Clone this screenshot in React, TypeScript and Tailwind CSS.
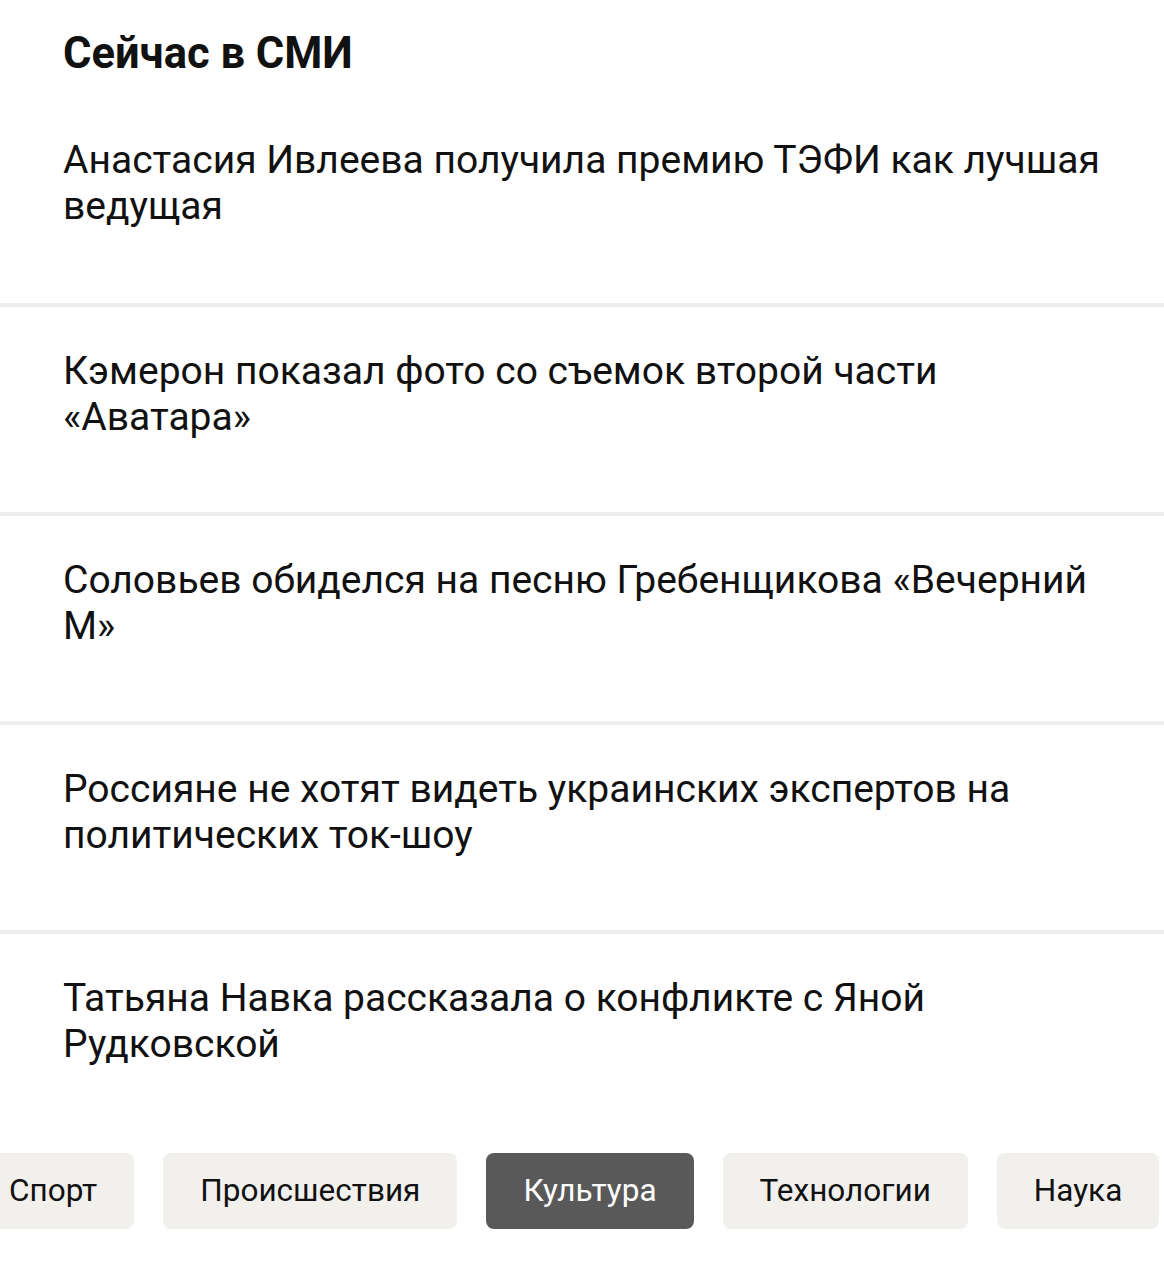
import React from "react";

const news = [
  "Анастасия Ивлеева получила премию ТЭФИ как лучшая ведущая",
  "Кэмерон показал фото со съемок второй части «Аватара»",
  "Соловьев обиделся на песню Гребенщикова «Вечерний М»",
  "Россияне не хотят видеть украинских экспертов на политических ток-шоу",
  "Татьяна Навка рассказала о конфликте с Яной Рудковской",
];

const tabs = ["Спорт", "Происшествия", "Культура", "Технологии", "Наука"];

export default function App() {
  return (
    <div
      className="w-[1164px] h-[1280px] bg-white overflow-hidden text-[#111111]"
      style={{ fontFamily: "Roboto, 'Noto Sans', sans-serif" }}
    >
      <h2 className="px-[63px] pt-[30px] text-[43.5px] leading-[47px] font-bold">Сейчас в СМИ</h2>
      <div className="mt-[60px]">
        {news.map((t, i) => (
          <div key={i}>
            {i > 0 && <div className="h-[4px] bg-[#eeeeee]" />}
            <div
              className={`pl-[63px] pr-[50px] text-[39px] leading-[46px] ${
                i === 0 ? "pb-[74px]" : i === news.length - 1 ? "pt-[41px]" : "pt-[41px] pb-[72px]"
              }`}
            >
              {t}
            </div>
          </div>
        ))}
      </div>
      <div className="mt-[86px] flex gap-[29px] ml-[-28px] overflow-hidden">
        {tabs.map((t) => (
          <div
            key={t}
            className={`shrink-0 h-[76px] px-[37px] rounded-[8px] flex items-center text-[31.5px] ${
              t === "Культура" ? "bg-[#595959] text-white" : "bg-[#f1f0ed] text-[#111111]"
            }`}
          >
            {t}
          </div>
        ))}
      </div>
    </div>
  );
}
